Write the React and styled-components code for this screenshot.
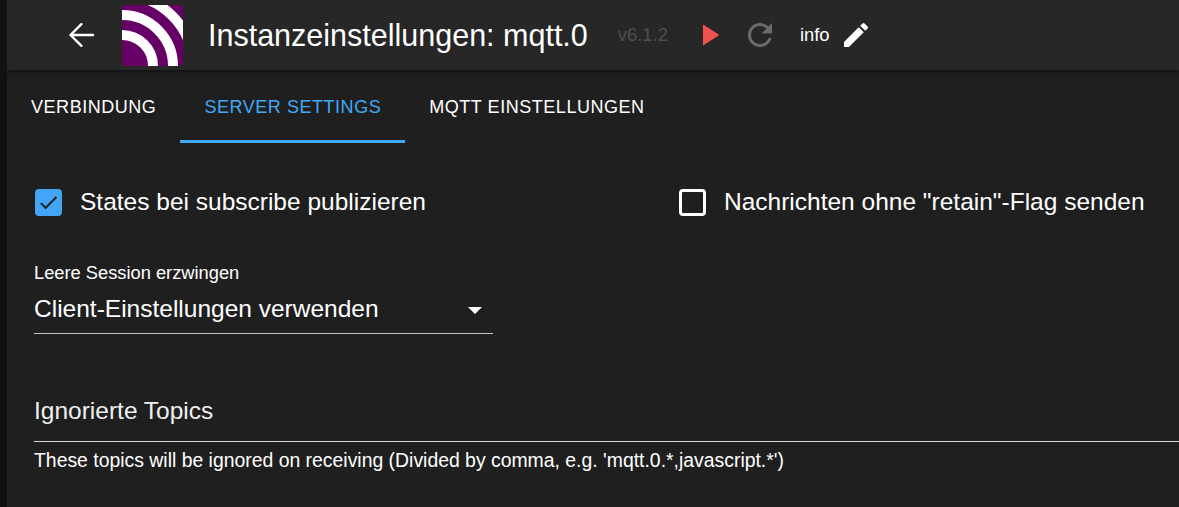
import React from "react";
import styled, { createGlobalStyle } from "styled-components";

const GlobalStyle = createGlobalStyle`
  html, body {
    margin: 0;
    height: 100%;
    background: #111111;
    overflow: hidden;
  }
  #root {
    height: 100%;
  }
`;

const Page = styled.div`
  height: 507px;
  padding-left: 7px;
  font-family: "Liberation Sans", Arial, sans-serif;
  color: #ffffff;
`;

const Panel = styled.div`
  height: 100%;
  background: #1f1f1f;
  overflow: hidden;
`;

const Toolbar = styled.header`
  height: 70px;
  display: flex;
  align-items: center;
  background: #272727;
  box-shadow: 0 2px 4px rgba(0, 0, 0, 0.45);
`;

const BackButton = styled.div`
  display: flex;
  margin-left: 56px;
  width: 36px;
`;

const Logo = styled.svg`
  display: block;
  margin: 1px 0 0 23px;
  width: 61px;
  height: 61px;
  border-radius: 3px;
`;

const Title = styled.h1`
  margin: 0 0 0 25px;
  font-size: 30.5px;
  font-weight: 400;
  white-space: nowrap;
`;

const Version = styled.span`
  margin-left: 30px;
  font-size: 18.4px;
  color: #4f4f4f;
`;

const IconSlot = styled.span`
  display: flex;
  margin-left: ${({ $gap }) => $gap}px;
`;

const InfoLabel = styled.span`
  margin-left: 22px;
  font-size: 18.4px;
`;

const Tabs = styled.nav`
  display: flex;
  height: 73px;
`;

const Tab = styled.div`
  display: flex;
  align-items: center;
  padding: 4px 24px 0;
  font-size: 18px;
  letter-spacing: 0.54px;
  color: ${({ $active }) => ($active ? "#3fa9f5" : "#ffffff")};
  border-bottom: 3px solid ${({ $active }) => ($active ? "#3fa9f5" : "transparent")};
`;

const Content = styled.main`
  padding: 0 0 0 27px;
`;

const CheckRow = styled.div`
  display: flex;
  margin-top: 43px;
`;

const CheckItem = styled.label`
  display: flex;
  align-items: center;
  gap: 18px;
  width: ${({ $width }) => $width}px;
  font-size: 24.5px;
  line-height: 32px;
  white-space: nowrap;
`;

const CheckBox = styled.span`
  display: flex;
  align-items: center;
  justify-content: center;
  box-sizing: border-box;
  width: 27px;
  height: 27px;
  border-radius: 4px;
  margin-left: 1px;
  background: ${({ $checked }) => ($checked ? "#42a5f5" : "transparent")};
  border: ${({ $checked }) => ($checked ? "none" : "3px solid #ffffff")};
`;

const SelectField = styled.div`
  width: 459px;
  margin-top: 45px;
`;

const SmallLabel = styled.div`
  font-size: 18.3px;
  line-height: 20px;
`;

const SelectValue = styled.div`
  display: flex;
  align-items: center;
  justify-content: space-between;
  box-sizing: border-box;
  height: 51px;
  padding: 1px 11px 0 0;
  font-size: 24.5px;
  border-bottom: 1px solid #c4c4c4;
`;

const Caret = styled.span`
  width: 0;
  height: 0;
  margin-top: 4px;
  border-left: 7px solid transparent;
  border-right: 7px solid transparent;
  border-top: 7px solid #ffffff;
`;

const TextField = styled.div`
  margin-top: 58px;
`;

const FieldValue = styled.div`
  height: 50px;
  line-height: 38px;
  font-size: 24.5px;
  color: #f0f0f0;
  box-sizing: border-box;
  border-bottom: 1px solid #d8d8d8;
`;

const HelperText = styled.div`
  margin-top: 7px;
  font-size: 19.4px;
  line-height: 22px;
  white-space: nowrap;
`;

function MqttLogo() {
  return (
    <Logo viewBox="0 0 61 61">
      <rect width="61" height="61" fill="#660066" />
      <g fill="none" stroke="#ffffff" strokeWidth="10">
        <circle cx="0" cy="61" r="31" />
        <circle cx="0" cy="61" r="51" />
        <circle cx="0" cy="61" r="71" />
      </g>
    </Logo>
  );
}

function App() {
  return (
    <Page>
      <GlobalStyle />
      <Panel>
        <Toolbar>
          <BackButton>
            <svg
              width="36"
              height="36"
              viewBox="0 0 24 24"
              fill="none"
              stroke="#ffffff"
              strokeWidth="1.6"
              strokeLinecap="round"
              strokeLinejoin="round"
            >
              <path d="M20 12H5M12.3 4.8 5 12l7.3 7.2" />
            </svg>
          </BackButton>
          <MqttLogo />
          <Title>Instanzeinstellungen: mqtt.0</Title>
          <Version>v6.1.2</Version>
          <IconSlot $gap={23}>
            <svg width="36" height="36" viewBox="0 0 24 24" fill="#ef5350">
              <path d="M8 5v14l11-7z" />
            </svg>
          </IconSlot>
          <IconSlot $gap={15}>
            <svg width="36" height="36" viewBox="0 0 24 24" fill="#6a6a6a">
              <path d="M17.65 6.35C16.2 4.9 14.21 4 12 4c-4.42 0-7.99 3.58-7.99 8s3.57 8 7.99 8c3.73 0 6.84-2.55 7.73-6h-2.08c-.82 2.33-3.04 4-5.65 4-3.31 0-6-2.69-6-6s2.69-6 6-6c1.66 0 3.14.69 4.22 1.78L13 11h7V4l-2.35 2.35z" />
            </svg>
          </IconSlot>
          <InfoLabel>info</InfoLabel>
          <IconSlot $gap={10}>
            <svg width="32" height="32" viewBox="0 0 24 24" fill="#ffffff">
              <path d="M3 17.25V21h3.75L17.81 9.94l-3.75-3.75L3 17.25zM20.71 7.04a1 1 0 0 0 0-1.41l-2.34-2.34a1 1 0 0 0-1.41 0l-1.83 1.83 3.75 3.75 1.83-1.83z" />
            </svg>
          </IconSlot>
        </Toolbar>
        <Tabs>
          <Tab>VERBINDUNG</Tab>
          <Tab $active>SERVER SETTINGS</Tab>
          <Tab>MQTT EINSTELLUNGEN</Tab>
        </Tabs>
        <Content>
          <CheckRow>
            <CheckItem $width={644}>
              <CheckBox $checked>
                <svg width="23" height="23" viewBox="0 0 24 24" fill="#1f1f1f">
                  <path d="M9 16.17 4.83 12l-1.42 1.41L9 19 21 7l-1.41-1.41z" />
                </svg>
              </CheckBox>
              States bei subscribe publizieren
            </CheckItem>
            <CheckItem $width={480}>
              <CheckBox />
              Nachrichten ohne "retain"-Flag senden
            </CheckItem>
          </CheckRow>
          <SelectField>
            <SmallLabel>Leere Session erzwingen</SmallLabel>
            <SelectValue>
              Client-Einstellungen verwenden
              <Caret />
            </SelectValue>
          </SelectField>
          <TextField>
            <FieldValue>Ignorierte Topics</FieldValue>
            <HelperText>These topics will be ignored on receiving (Divided by comma, e.g. 'mqtt.0.*,javascript.*')</HelperText>
          </TextField>
        </Content>
      </Panel>
    </Page>
  );
}

export default App;
